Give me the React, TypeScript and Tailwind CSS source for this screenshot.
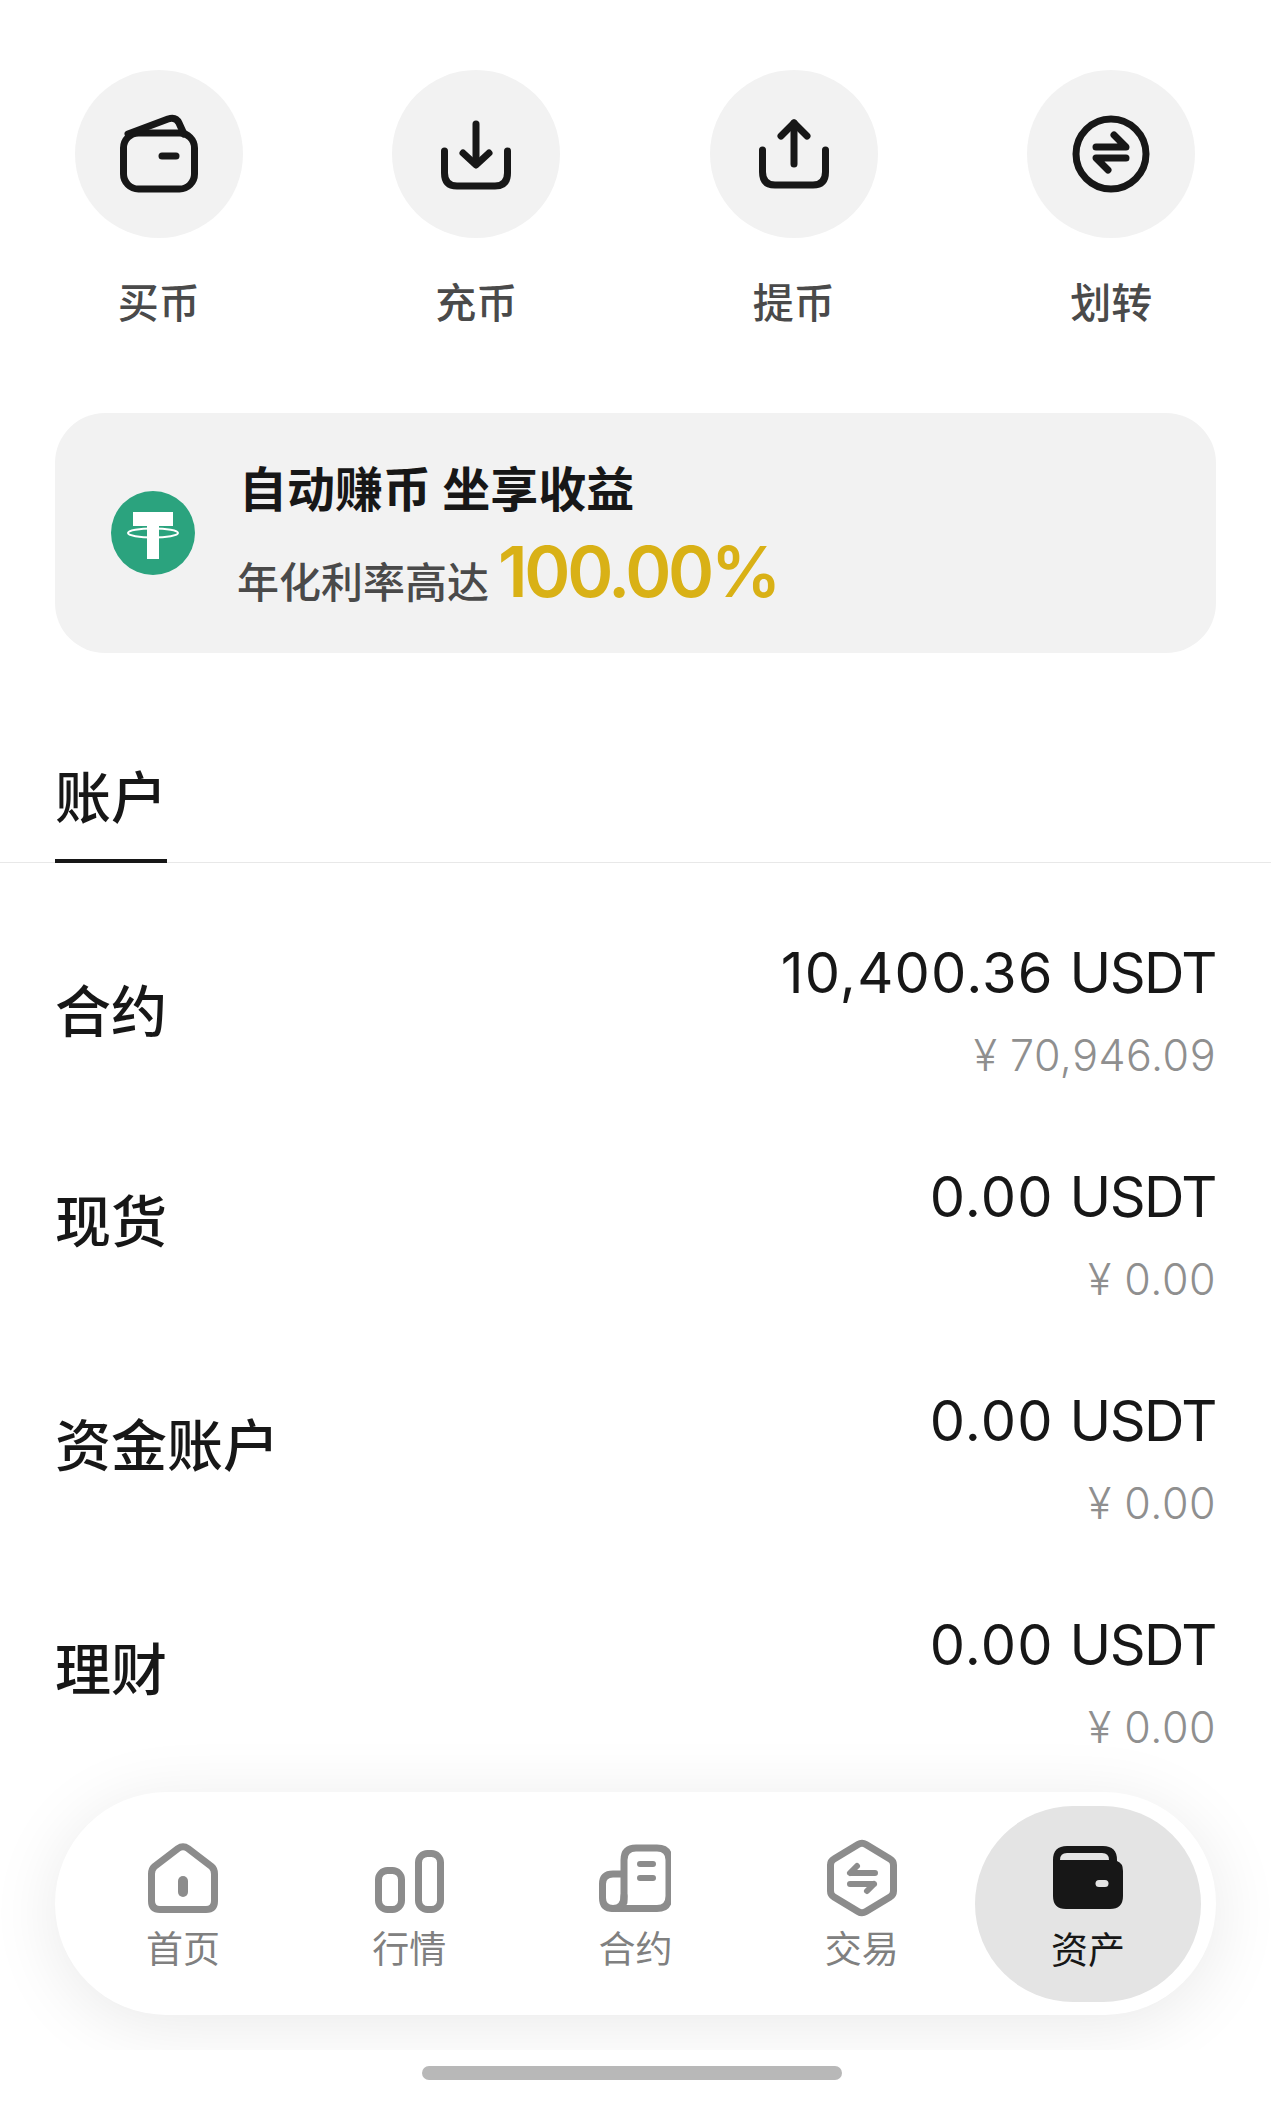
import { ReactNode } from 'react';

const cn = "font-['Inter','Noto_Sans_CJK_SC',sans-serif]";

function Actions() {
  const items: { label: string; icon: ReactNode }[] = [
    {
      label: '买币',
      icon: (
        <g>
          <rect x="9.5" y="24" width="71" height="56" rx="15" />
          <path d="M14 25 L54 10 Q62 7.5 65 14 L70 25" />
          <path d="M48 47 H62" />
        </g>
      ),
    },
    {
      label: '充币',
      icon: (
        <g transform="translate(0 2)">
          <path d="M45 13 V53" />
          <path d="M32 42 L45 54 L58 42" />
          <path d="M13.5 40 V62 Q13.5 75 26 75 H64 Q76.5 75 76.5 62 V40" />
        </g>
      ),
    },
    {
      label: '提币',
      icon: (
        <g transform="translate(0 1)">
          <path d="M45 13 V54" />
          <path d="M32 26 L45 13 L58 26" />
          <path d="M13.5 40 V62 Q13.5 75 26 75 H64 Q76.5 75 76.5 62 V40" />
        </g>
      ),
    },
    {
      label: '划转',
      icon: (
        <g transform="translate(0 1)">
          <circle cx="45" cy="44" r="35" />
          <path d="M30 37 H60 L48 25" />
          <path d="M60 48 H30 L42 60" />
        </g>
      ),
    },
  ];

  return (
    <div className="grid grid-cols-4 w-[1270px] pt-[70px]">
      {items.map((it) => (
        <div key={it.label} className="flex flex-col items-center">
          <div className="w-[168px] h-[168px] rounded-full bg-[#f2f2f2] flex items-center justify-center">
            <svg width="90" height="90" viewBox="0 0 90 90" fill="none" stroke="#171717" strokeWidth="7" strokeLinecap="round" strokeLinejoin="round">
              {it.icon}
            </svg>
          </div>
          <div className="mt-[39px] text-[41px] leading-[52px] font-medium text-[#4a4a4a]">{it.label}</div>
        </div>
      ))}
    </div>
  );
}

function Banner() {
  return (
    <div className="mx-[55px] mt-[84px] h-[240px] rounded-[50px] bg-[#f2f2f2] flex items-center pl-[56px]">
      <svg width="84" height="84" viewBox="0 0 84 84" className="shrink-0">
        <circle cx="42" cy="42" r="42" fill="#2ba37e" />
        <path d="M22 21 H62 V35 H48 V68 H36 V35 H22 Z" fill="#fff" />
        <ellipse cx="42" cy="42" rx="25" ry="4.5" fill="none" stroke="#fff" strokeWidth="2" />
      </svg>
      <div className="ml-[42px]">
        <div className="text-[48px] leading-[60px] font-bold text-[#171717] pl-[2px] -mt-[5px]">自动赚币 坐享收益</div>
        <div className="flex items-end mt-[14px] -mb-[9px]">
          <span className="text-[42px] leading-[54px] font-medium text-[#4a4a4a]">年化利率高达</span>
          <span className="ml-[9px] text-[70px] leading-[76px] font-semibold text-[#d9b116] tracking-[-3.3px]">100.00%</span>
        </div>
      </div>
    </div>
  );
}

function Tabs() {
  return (
    <div className="mt-[104px] border-b border-[#e8e8e8] px-[55px]">
      <div className="w-[112px] border-b-[4px] border-[#171717] -mb-px h-[106px] pb-[20px] flex items-center">
        <span className="text-[56px] leading-[70px] font-medium text-[#171717]">账户</span>
      </div>
    </div>
  );
}

function Rows() {
  const rows = [
    { name: '合约', usdt: '10,400.36', cny: '¥ 70,946.09', labelTop: 'mt-[40px]' },
    { name: '现货', usdt: '0.00', cny: '¥ 0.00', labelTop: 'mt-[26px]' },
    { name: '资金账户', usdt: '0.00', cny: '¥ 0.00', labelTop: 'mt-[26px]' },
    { name: '理财', usdt: '0.00', cny: '¥ 0.00', labelTop: 'mt-[26px]' },
  ];
  return (
    <div className="px-[55px] pt-[74px]">
      {rows.map((r) => (
        <div key={r.name} className="flex justify-between items-start h-[224px] last:h-[120px]">
          <div className={`text-[56px] leading-[70px] font-medium text-[#171717] ${r.labelTop}`}>{r.name}</div>
          <div className="text-right">
            <div className="text-[56px] leading-[72px] text-[#171717]">
              <span className="tracking-[1.2px]">{r.usdt}</span> <span className="tracking-[-1.5px]">USDT</span>
            </div>
            <div className="mt-[18px] text-[43px] leading-[56px] font-light text-[#8f8f8f] tracking-[0.5px]">{r.cny}</div>
          </div>
        </div>
      ))}
    </div>
  );
}

function BottomNav() {
  const items: { label: string; icon: ReactNode }[] = [
    {
      label: '首页',
      icon: (
        <g transform="translate(0 4)">
          <path d="M3.5 31 Q3.5 26 6.5 23.5 L30 5.5 Q35 2 40 5.5 L63.5 23.5 Q66.5 26 66.5 31 V58 Q66.5 66.5 58 66.5 H12 Q3.5 66.5 3.5 58 Z" />
          <path d="M35 38 V49" strokeWidth="10" />
        </g>
      ),
    },
    {
      label: '行情',
      icon: (
        <g>
          <rect x="4.5" y="31.5" width="23" height="39" rx="9" />
          <rect x="44.5" y="14.5" width="22" height="56" rx="9" />
        </g>
      ),
    },
    {
      label: '合约',
      icon: (
        <g transform="translate(-1 5)">
          <path d="M25 58 V16 Q25 4 37 4 H58 Q70 4 70 16 V52 Q70 64.5 58 64.5 H14 Q3.5 64.5 3.5 54 V40 Q3.5 30 14 30 H25" />
          <path d="M25 52 Q25 64.5 14 64.5" />
          <path d="M41 20 H54 M41 34 H54" strokeWidth="6" />
        </g>
      ),
    },
    {
      label: '交易',
      icon: (
        <g>
          <path d="M31 5.5 Q35 3 39 5.5 L63 20 Q66.5 22 66.5 26 V52 Q66.5 56 63 58 L39 72.5 Q35 75 31 72.5 L7 58 Q3.5 56 3.5 52 V26 Q3.5 22 7 20 Z" />
          <path d="M24 34 H48 M30 27 L23 34 M23 45 H47 M47 45 L40 52" strokeWidth="6" />
        </g>
      ),
    },
  ];
  return (
    <div className="h-[321px] overflow-hidden pt-[63px] px-[55px]">
      <div className="h-[223px] rounded-full bg-white shadow-[0_10px_70px_rgba(0,0,0,0.09)] pl-[15px] pr-[15px] flex items-center">
        <div className="grid grid-cols-5 w-full h-[196px]">
          {items.map((it) => (
            <div key={it.label} className="flex flex-col items-center justify-start pt-[33px]">
              <svg width="72" height="78" viewBox="-1 0 72 78" fill="none" stroke="#8c8c8c" strokeWidth="7" strokeLinecap="round" strokeLinejoin="round">
                {it.icon}
              </svg>
              <div className="mt-[10px] text-[37px] leading-[46px] text-[#808080]">{it.label}</div>
            </div>
          ))}
          <div className="flex flex-col items-center rounded-full bg-[#e4e4e4] pt-[40px]">
            <svg width="70" height="63" viewBox="0 0 70 63">
              <path d="M14 0 H50 Q64 0 64 14 V15 Q70 17 70 25 V50 Q70 63 57 63 H13 Q0 63 0 50 V14 Q0 0 14 0 Z" fill="#171717" />
              <path d="M7 14 Q7 7 14 7 H49 Q56 7 56 14 Z" fill="#e4e4e4" />
              <rect x="42.5" y="34" width="13" height="7" rx="3.5" fill="#e4e4e4" />
            </svg>
            <div className="mt-[19px] text-[37px] leading-[46px] text-[#171717]">资产</div>
          </div>
        </div>
      </div>
    </div>
  );
}

export default function App() {
  return (
    <div className={`w-[1271px] h-[2105px] overflow-hidden bg-white ${cn}`}>
      <Actions />
      <Banner />
      <Tabs />
      <Rows />
      <BottomNav />
      <div className="mt-[16px] ml-[422px] w-[420px] h-[14px] rounded-full bg-[#b8b8b8]" />
    </div>
  );
}
